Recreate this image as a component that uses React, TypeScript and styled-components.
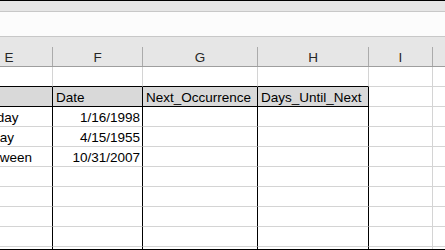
import React from "react";
import styled, { createGlobalStyle } from "styled-components";

type Column = { letter: string; width: number };

// J is only partly on screen, so its letter is not shown
const columns: Column[] = [
  { letter: "E", width: 87 },
  { letter: "F", width: 90 },
  { letter: "G", width: 115 },
  { letter: "H", width: 111 },
  { letter: "I", width: 64 },
  { letter: "", width: 120 },
];

// rows of the sheet, starting at row 1; only the first 4 columns hold the table
const rows: string[][] = [
  [],
  ["", "Date", "Next_Occurrence", "Days_Until_Next"],
  ["Birthday", "1/16/1998"],
  ["Holiday", "4/15/1955"],
  ["Halloween", "10/31/2007"],
  [],
  [],
  [],
  [],
  [],
];

const TABLE_COLS = 4;
const template = columns.map((c) => `${c.width}px`).join(" ");

export default function App() {
  return (
    <>
      <GlobalStyle />
      <Frame>
        <Ribbon />
        <FormulaBar />
        <ColumnHeader $cols={template}>
          {columns.map((c, i) => (
            <HeaderCell key={i}>
              <HeaderLabel>{c.letter}</HeaderLabel>
            </HeaderCell>
          ))}
        </ColumnHeader>
        <Sheet $cols={template}>
          {rows.map((row, r) =>
            columns.map((_, ci) => {
              const inTable = ci < TABLE_COLS;
              const value = row[ci] ?? "";
              const isDate = r > 1 && ci === 1;
              return (
                <Cell
                  key={`${r}-${ci}`}
                  $bottomDark={inTable && r <= 1}
                  $rightDark={inTable && r >= 1}
                  $head={inTable && r === 1}
                  $align={isDate ? "right" : "left"}
                >
                  {value}
                </Cell>
              );
            })
          )}
        </Sheet>
      </Frame>
    </>
  );
}

const GlobalStyle = createGlobalStyle`
  html, body {
    margin: 0;
    padding: 0;
    background: #ffffff;
    overflow: hidden;
  }
  body {
    font-family: "Liberation Sans", Arial, sans-serif;
  }
`;

const Frame = styled.div`
  width: 445px;
  height: 250px;
  box-sizing: border-box;
  border-top: 1px solid #000000;
  border-bottom: 1px solid #000000;
  display: flex;
  flex-direction: column;
  overflow: hidden;
  background: #ffffff;
`;

const Ribbon = styled.div`
  height: 10px;
  flex-shrink: 0;
  background: #e6e6e6;
  border-bottom: 1px solid #c8c8c8;
`;

const FormulaBar = styled.div`
  height: 24px;
  flex-shrink: 0;
  background: #fcfcfc;
  border-bottom: 1px solid #c8c8c8;
`;

const ColumnHeader = styled.div<{ $cols: string }>`
  height: 29px;
  flex-shrink: 0;
  display: grid;
  grid-template-columns: ${({ $cols }) => $cols};
  margin-left: -34px;
  background: #e6e6e6;
  border-bottom: 1px solid #9e9e9e;
`;

const HeaderCell = styled.div`
  display: flex;
  flex-direction: column;
  justify-content: flex-end;
`;

const HeaderLabel = styled.div`
  height: 19px;
  box-sizing: border-box;
  border-right: 1px solid #ababab;
  display: flex;
  align-items: center;
  justify-content: center;
  padding-top: 1px;
  font-size: 13.5px;
  color: #262626;
`;

const Sheet = styled.div<{ $cols: string }>`
  flex: 1;
  min-height: 0;
  overflow: hidden;
  display: grid;
  grid-template-columns: ${({ $cols }) => $cols};
  grid-auto-rows: 20px;
  margin-left: -34px;
`;

const Cell = styled.div<{
  $bottomDark: boolean;
  $rightDark: boolean;
  $head: boolean;
  $align: "left" | "right";
}>`
  box-sizing: border-box;
  height: 20px;
  border-right: 1px solid ${({ $rightDark }) => ($rightDark ? "#000000" : "#d4d4d4")};
  border-bottom: 1px solid ${({ $bottomDark }) => ($bottomDark ? "#000000" : "#d4d4d4")};
  background: ${({ $head }) => ($head ? "#d9d9d9" : "#ffffff")};
  display: flex;
  align-items: flex-end;
  justify-content: ${({ $align }) => ($align === "right" ? "flex-end" : "flex-start")};
  padding: 0 2px 1px 3px;
  overflow: hidden;
  white-space: nowrap;
  font-size: 13.5px;
  line-height: 15px;
  color: #000000;
`;
